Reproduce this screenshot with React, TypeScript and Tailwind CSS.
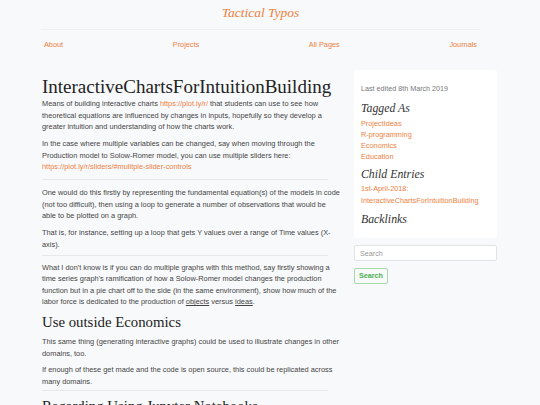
import { Fragment, type ReactNode } from "react";

const links = "text-[#ef7f3f]";
const serifHead = "font-['Liberation_Serif','Times_New_Roman',serif]";

function SideHeading({ children, className = "" }: { children: string; className?: string }) {
  return (
    <h3 className={`text-[11.8px] italic leading-[14px] text-[#333] ${serifHead} ${className}`}>
      {children}
    </h3>
  );
}

// paragraph broken into the same lines as the original page
function Para({ lines, className = "" }: { lines: ReactNode[]; className?: string }) {
  return (
    <p className={`whitespace-nowrap text-[7.4px] leading-[11.6px] text-[#444] ${className}`}>
      {lines.map((line, i) => (
        <Fragment key={i}>
          {i > 0 && <br />}
          {line}
        </Fragment>
      ))}
    </p>
  );
}

function Sidebar() {
  return (
    <aside className="w-[143px] shrink-0">
      <div className="rounded-[2px] bg-white px-[7px] pt-[13px] pb-[12px]">
        <p className="text-[7.2px] leading-[12px] text-[#777]">Last edited 8th March 2019</p>
        <SideHeading className="mt-[6px]">Tagged As</SideHeading>
        <ul className={`mt-[2.5px] text-[7.3px] leading-[11px] ${links}`}>
          <li>ProjectIdeas</li>
          <li>R-programming</li>
          <li>Economics</li>
          <li>Education</li>
        </ul>
        <SideHeading className="mt-[5.5px]">Child Entries</SideHeading>
        <p className={`mt-[2px] text-[7.3px] leading-[12px] ${links}`}>
          1st-April-2018:
          <br />
          InteractiveChartsForIntuitionBuilding
        </p>
        <SideHeading className="mt-[5px]">Backlinks</SideHeading>
      </div>
      <div className="mt-[7px]">
        <input
          placeholder="Search"
          className="block h-[16px] w-full rounded-[2px] border border-[#e3e3e3] bg-white px-[5px] text-[7.2px] text-[#333] outline-none placeholder:text-[#999]"
        />
        <button className="mt-px h-[16px] w-[34px] rounded-[2px] border border-[#a8d8ad] bg-[#f8f9fb] text-[7.2px] font-bold text-[#4caf50]">
          Search
        </button>
      </div>
    </aside>
  );
}

function Rule({ className = "" }: { className?: string }) {
  return <div className={`border-t border-[#e6e8eb] ${className}`} />;
}

function Article() {
  return (
    <article className="w-[286px] shrink-0">
      <h1 className={`mt-[6px] text-[19px] leading-[22px] text-[#222] ${serifHead}`}>
        InteractiveChartsForIntuitionBuilding
      </h1>
      <Para
        lines={[
          <>
            Means of building interactive charts <span className={links}>https://plot.ly/r/</span>{" "}
            that students can use to see how
          </>,
          "theoretical equations are influenced by changes in inputs, hopefully so they develop a",
          "greater intuition and understanding of how the charts work.",
        ]}
      />
      <Para
        className="mt-[5.5px]"
        lines={[
          "In the case where multiple variables can be changed, say when moving through the",
          "Production model to Solow-Romer model, you can use multiple sliders here:",
          <span className={links}>https://plot.ly/r/sliders/#mulitple-slider-controls</span>,
        ]}
      />
      <Rule className="mt-[6px] mb-[7px]" />
      <Para
        lines={[
          "One would do this firstly by representing the fundamental equation(s) of the models in code",
          "(not too difficult), then using a loop to generate a number of observations that would be",
          "able to be plotted on a graph.",
        ]}
      />
      <Para
        className="mt-[5.5px]"
        lines={[
          "That is, for instance, setting up a loop that gets Y values over a range of Time values (X-",
          "axis).",
        ]}
      />
      <Rule className="mt-[4px] mb-[6px]" />
      <Para
        lines={[
          "What I don't know is if you can do multiple graphs with this method, say firstly showing a",
          "time series graph's ramification of how a Solow-Romer model changes the production",
          "function but in a pie chart off to the side (in the same environment), show how much of the",
          <>
            labor force is dedicated to the production of <span className="underline">objects</span>{" "}
            versus <span className="underline">ideas</span>.
          </>,
        ]}
      />
      <h2 className={`mt-[5px] text-[14.8px] leading-[18px] text-[#222] ${serifHead}`}>
        Use outside Economics
      </h2>
      <Para
        className="mt-[5px]"
        lines={[
          "This same thing (generating interactive graphs) could be used to illustrate changes in other",
          "domains, too.",
        ]}
      />
      <Para
        className="mt-[5px]"
        lines={[
          "If enough of these get made and the code is open source, this could be replicated across",
          "many domains.",
        ]}
      />
      <Rule className="mt-[3px] mb-[6px]" />
      <h2 className={`text-[14.8px] leading-[18px] text-[#222] ${serifHead}`}>
        Regarding Using Jupyter Notebooks
      </h2>
    </article>
  );
}

export default function App() {
  return (
    <div className="h-[405px] overflow-hidden bg-[#f8f9fb] font-['Liberation_Sans',Arial,sans-serif]">
      <header className="ml-[41px] w-[439px]">
        <div className="pt-[3px] pb-[7px] text-center leading-[18px]">
          <span className={`text-[13.5px] italic ${serifHead} ${links}`}>Tactical Typos</span>
        </div>
        <Rule className="border-[#eef0f3]" />
        <nav className={`flex justify-between px-[3px] pt-[10px] text-[7.3px] leading-[10px] ${links}`}>
          <span>About</span>
          <span>Projects</span>
          <span>All Pages</span>
          <span>Journals</span>
        </nav>
      </header>
      <main className="mt-[20px] ml-[42px] flex w-[455px] justify-between">
        <Article />
        <Sidebar />
      </main>
    </div>
  );
}
